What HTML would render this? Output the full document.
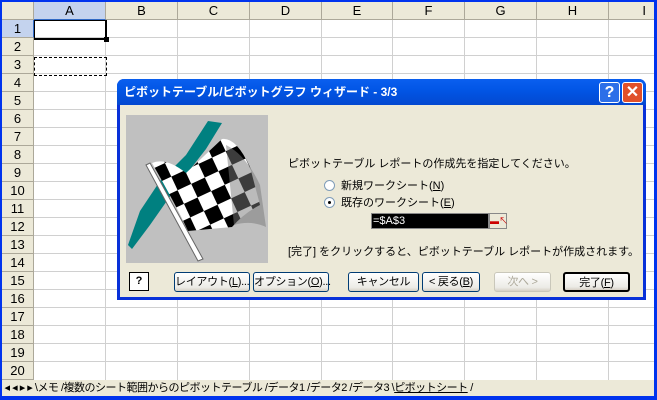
<!DOCTYPE html>
<html><head><meta charset="utf-8"><style>
*{margin:0;padding:0;box-sizing:border-box}
body{width:657px;height:400px;overflow:hidden;background:#0033ee;font-family:"Liberation Sans","Noto Sans CJK JP",sans-serif;font-size:11px;position:relative;white-space:nowrap}
.a{position:absolute}
#sheet{left:2px;top:2px;width:652px;height:378px;background:#fff;overflow:hidden}
.ch{position:absolute;top:0;height:18px;background:#ECE9D8;border-right:1px solid #ACA899;border-bottom:1px solid #ACA899;text-align:center;line-height:18px;font-size:13px}
.rh{position:absolute;left:0;width:32px;height:18px;background:#ECE9D8;border-right:1px solid #ACA899;border-bottom:1px solid #ACA899;text-align:center;line-height:18px;font-size:13px}
.vl{position:absolute;top:18px;width:1px;height:360px;background:#D0D0D0}
.hl{position:absolute;left:32px;height:1px;width:620px;background:#D0D0D0}
#tabs{left:2px;top:380px;width:652px;height:16px;background:#ECE9D8;font-size:11px;line-height:16px;letter-spacing:-0.5px}
#dlg{left:117px;top:79px;width:529px;height:221px;background:#ECE9D8;border:3px solid #0831D9;border-top:none;border-radius:7px 7px 0 0}
#tb{left:-3px;top:0;width:529px;height:26px;background:linear-gradient(#0A5FEF,#0256E6 40%,#0348D0);border-radius:7px 7px 0 0;color:#fff;font-weight:bold;font-size:12px;line-height:26px;padding-left:7px}
.btn{position:absolute;top:193px;height:20px;border:1px solid #003C74;border-radius:3px;background:linear-gradient(#fff,#ECEBE6 80%,#D6D0C5);text-align:center;line-height:18px;font-size:11px;letter-spacing:-0.3px}
</style></head><body>
<div id="sheet" class="a">
<div class="rh" style="top:0;height:18px"></div>
<div class="ch" style="left:32px;width:72px;background:#C4D3EE;border-bottom:1px solid #316AC5">A</div>
<div class="ch" style="left:104px;width:72px">B</div>
<div class="ch" style="left:176px;width:72px">C</div>
<div class="ch" style="left:248px;width:72px">D</div>
<div class="ch" style="left:320px;width:71px">E</div>
<div class="ch" style="left:391px;width:72px">F</div>
<div class="ch" style="left:463px;width:72px">G</div>
<div class="ch" style="left:535px;width:72px">H</div>
<div class="ch" style="left:607px;width:50px;text-align:right;padding-right:12px">I</div>
<div class="vl" style="left:103px"></div><div class="vl" style="left:175px"></div><div class="vl" style="left:247px"></div><div class="vl" style="left:319px"></div><div class="vl" style="left:390px"></div><div class="vl" style="left:462px"></div><div class="vl" style="left:534px"></div><div class="vl" style="left:606px"></div>
<div class="hl" style="top:35px"></div><div class="hl" style="top:53px"></div><div class="hl" style="top:71px"></div><div class="hl" style="top:89px"></div><div class="hl" style="top:107px"></div><div class="hl" style="top:125px"></div><div class="hl" style="top:143px"></div><div class="hl" style="top:161px"></div><div class="hl" style="top:179px"></div><div class="hl" style="top:197px"></div><div class="hl" style="top:215px"></div><div class="hl" style="top:233px"></div><div class="hl" style="top:251px"></div><div class="hl" style="top:269px"></div><div class="hl" style="top:287px"></div><div class="hl" style="top:305px"></div><div class="hl" style="top:323px"></div><div class="hl" style="top:341px"></div><div class="hl" style="top:359px"></div>
<div class="rh" style="top:18px;background:#C4D3EE;border-right:1px solid #316AC5">1</div>
<div class="rh" style="top:36px">2</div><div class="rh" style="top:54px">3</div><div class="rh" style="top:72px">4</div><div class="rh" style="top:90px">5</div><div class="rh" style="top:108px">6</div><div class="rh" style="top:126px">7</div><div class="rh" style="top:144px">8</div><div class="rh" style="top:162px">9</div><div class="rh" style="top:180px">10</div><div class="rh" style="top:198px">11</div><div class="rh" style="top:216px">12</div><div class="rh" style="top:234px">13</div><div class="rh" style="top:252px">14</div><div class="rh" style="top:270px">15</div><div class="rh" style="top:288px">16</div><div class="rh" style="top:306px">17</div><div class="rh" style="top:324px">18</div><div class="rh" style="top:342px">19</div><div class="rh" style="top:360px">20</div>
<div class="a" style="left:32px;top:18px;width:73px;height:20px;border:2px solid #000;border-top:1px solid #000;border-left:1px solid #000"></div>
<div class="a" style="left:102px;top:35px;width:5px;height:5px;background:#000"></div>
<div class="a" style="left:32px;top:55px;width:73px;height:19px;border:1px dashed #000"></div>
</div>
<div id="tabs" class="a">&nbsp;◂ ◂ ▸ ▸ \メモ /複数のシート範囲からのピボットテーブル /データ1 /データ2 /データ3 \<u>ピボットシート</u> /</div>
<div id="dlg" class="a">
<div id="tb" class="a">ピボットテーブル/ピボットグラフ ウィザード - 3/3
<div class="a" style="left:482px;top:3px;width:21px;height:21px;border:1px solid #fff;border-radius:3px;background:#2D6FE8;text-align:center;line-height:19px;font-size:16px">?</div>
<div class="a" style="left:505px;top:3px;width:21px;height:21px;border:1px solid #fff;border-radius:3px;background:#E0502A;text-align:center;line-height:19px;font-size:16px">✕</div>
</div>
<svg class="a" style="left:6px;top:36px" width="142" height="148">
<rect width="142" height="148" fill="#C0C0C0"/>
<defs><pattern id="ck" width="30" height="30" patternUnits="userSpaceOnUse" patternTransform="rotate(-25)"><rect width="30" height="30" fill="#fff"/><rect width="15" height="15" fill="#000"/><rect x="15" y="15" width="15" height="15" fill="#000"/></pattern></defs>
<path d="M2 130 L14 96 L34 66 L60 40 L82 6 L96 8 L80 34 L52 70 L24 110 L6 134Z" fill="#008080"/>
<path d="M26 48 Q40 42 60 58 L96 24 Q110 22 124 52 L134 90 Q118 98 106 112 L62 116 Q50 90 26 48Z" fill="url(#ck)"/>
<path d="M100 30 Q120 40 134 70 L140 112 Q125 105 108 110Z" fill="#777" opacity=".5"/>
<path d="M20 50 L24 48 L77 144 L72 146Z" fill="#fff" stroke="#666"/>
</svg>
<div class="a" style="left:168px;top:76px">ピボットテーブル レポートの作成先を指定してください。</div>
<div class="a" style="left:204px;top:101px;width:11px;height:11px;border-radius:50%;border:1px solid #7F9DB9;background:#fff"></div>
<div class="a" style="left:221px;top:98px">新規ワークシート(<u>N</u>)</div>
<div class="a" style="left:204px;top:118px;width:11px;height:11px;border-radius:50%;border:1px solid #7F9DB9;background:#fff"><div class="a" style="left:3px;top:3px;width:3px;height:3px;background:#000;border-radius:50%"></div></div>
<div class="a" style="left:221px;top:115px">既存のワークシート(<u>E</u>)</div>
<div class="a" style="left:251px;top:134px;width:118px;height:16px;background:#000;color:#fff;line-height:14px;padding-left:1px;border:1px solid #888">=$A$3</div>
<div class="a" style="left:369px;top:134px;width:18px;height:16px;background:#ECE9D8;border:1px solid #888;color:#c00;font-size:9px;text-align:center;line-height:14px">▬↖</div>
<div class="a" style="left:168px;top:164px">[完了] をクリックすると、ピボットテーブル レポートが作成されます。</div>
<div class="a" style="left:9px;top:193px;width:20px;height:19px;border:1px solid #000;background:#fff;text-align:center;font-weight:bold;line-height:17px">?</div>
<div class="btn" style="left:54px;width:76px">レイアウト(<u>L</u>)...</div>
<div class="btn" style="left:133px;width:76px">オプション(<u>O</u>)...</div>
<div class="btn" style="left:228px;width:71px">キャンセル</div>
<div class="btn" style="left:302px;width:58px">&lt; 戻る(<u>B</u>)</div>
<div class="btn" style="left:374px;width:57px;color:#ACA899;border-color:#C9C7BA">次へ &gt;</div>
<div class="btn" style="left:443px;width:67px;border:2px solid #000">完了(<u>F</u>)</div>
</div>
</body></html>
